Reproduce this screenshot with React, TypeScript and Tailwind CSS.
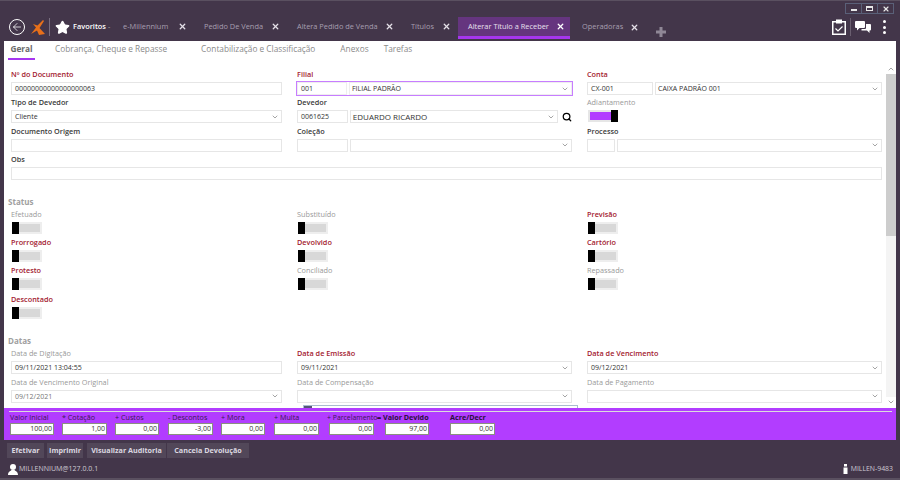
import React from "react";
import { ArrowLeft, ChevronDown, ChevronUp, Search, Star, X } from "lucide-react";

const tabs = [
  { name: "e-Millennium", w: "w-[64px]" },
  { name: "Pedido De Venda", w: "w-[76px]" },
  { name: "Altera Pedido de Venda", w: "w-[97px]" },
  { name: "Títulos", w: "w-[40px]" },
];

const totals = [
  { label: "Valor Inicial", value: "100,00", w: "w-[44px]", ml: "", lbl: "" },
  { label: "* Cotação", value: "1,00", w: "w-[45px]", ml: "ml-[8px]", lbl: "" },
  { label: "+ Custos", value: "0,00", w: "w-[44px]", ml: "ml-[8px]", lbl: "" },
  { label: "- Descontos", value: "-3,00", w: "w-[45px]", ml: "ml-[9px]", lbl: "" },
  { label: "+ Mora", value: "0,00", w: "w-[44px]", ml: "ml-[8px]", lbl: "" },
  { label: "+ Multa", value: "0,00", w: "w-[45px]", ml: "ml-[9px]", lbl: "" },
  { label: "+ Parcelamento", value: "0,00", w: "w-[45px]", ml: "ml-[10px]", lbl: "-ml-[2px] !text-[6.9px]" },
  { label: "= Valor Devido", value: "97,00", w: "w-[44px]", ml: "ml-[11px]", lbl: "-ml-[8px]", bold: true },
  { label: "Acre/Decr", value: "0,00", w: "w-[45px]", ml: "ml-[21px]", lbl: "", bold: true },
];

const buttons = [
  { label: "Efetivar", cls: "w-[37px]" },
  { label: "Imprimir", cls: "w-[36px] ml-[3px]" },
  { label: "Visualizar Auditoria", cls: "w-[79px] ml-[4px]" },
  { label: "Cancela Devolução", cls: "w-[82px] ml-[1px]" },
];

const Label = ({ children, color = "dark" }: { children: React.ReactNode; color?: string }) => (
  <div
    className={
      "h-[15px] leading-[15px] text-[7.3px] whitespace-nowrap " +
      (color === "red"
        ? "text-[#a3202f] font-semibold"
        : color === "gray"
          ? "text-[#999999] font-medium"
          : "text-[#3a3a3a] font-semibold")
    }
  >
    {children}
  </div>
);

const Box = ({ children, className = "", arrow = false, gray = false }: { children?: React.ReactNode; className?: string; arrow?: boolean; gray?: boolean }) => (
  <div
    className={
      "flex items-center justify-between h-[13px] border border-[#e6e6e6] bg-white pl-[3px] pr-[2px] leading-none whitespace-nowrap " +
      (gray ? "text-[#777777] " : "text-[#333333] ") +
      className
    }
  >
    <span>{children}</span>
    {arrow && <ChevronDown size={8} strokeWidth={2} className="text-[#777777] shrink-0" />}
  </div>
);

const Toggle = ({ on = false }: { on?: boolean }) => (
  <div className="h-[13px] flex items-start">
    {on ? (
      <div className="relative w-[30px] h-[12px] bg-[#e6e6e6] p-[2px] ml-[1px]">
        <div className="h-full w-[21px] bg-[#b23dff]" />
        <div className="absolute right-0 top-0 h-[12px] w-[7px] bg-black" />
      </div>
    ) : (
      <div className="relative w-[30px] h-[12px] bg-[#eeeeee] py-[2px] pl-[7px] pr-[2px] ml-[1px]">
        <div className="h-full bg-[#d8d8d8]" />
        <div className="absolute left-0 top-0 h-[12px] w-[7px] bg-black" />
      </div>
    )}
  </div>
);

const Field = ({ label, color, children }: { label: string; color?: string; children: React.ReactNode }) => (
  <div className="h-[28.4px]">
    <Label color={color}>{label}</Label>
    {children}
  </div>
);

const Switch = ({ label, color, on }: { label: string; color?: string; on?: boolean }) => (
  <Field label={label} color={color}>
    <Toggle on={on} />
  </Field>
);

const Heading = ({ children }: { children: React.ReactNode }) => (
  <div className="h-[13px] leading-[15px] -ml-[3px] text-[8px] font-bold text-[#a0a0a0]">{children}</div>
);

export default function App() {
  return (
    <div
      className="w-[900px] h-[480px] flex flex-col overflow-hidden bg-[#43364a] border-t border-[#5a5060]"
      style={{ fontFamily: '"Open Sans", "Noto Sans", sans-serif' }}
    >
      {/* topo */}
      <div className="h-[40px] flex shrink-0 relative">
        <div className="flex items-end h-full w-full pb-[1px]">
          <div className="flex items-center w-[115px] h-[22px] pl-[9px] mb-[2px]">
            <div className="w-[16px] h-[16px] rounded-full border border-white flex items-center justify-center shrink-0">
              <ArrowLeft size={12} className="text-white" strokeWidth={1.5} />
            </div>
            <svg width="14" height="15" viewBox="0 0 14 15" className="ml-[6px] shrink-0">
              <path d="M12 0 L13 1 L8.5 8 L14 14 L8 15 L6 10.5 L0 14 L5 7.5 L2 4 L6.5 5.5 Z" fill="#e8701a" />
            </svg>
            <div className="w-px h-[18px] bg-[#7a6f80] ml-[4px] shrink-0" />
            <Star size={15} fill="white" className="text-white ml-[5px] shrink-0" />
            <span className="ml-[3px] text-[7.4px] font-semibold text-white whitespace-nowrap">Favoritos</span>
            <span className="ml-[2px] text-[7px] text-[#aaaaaa]">-</span>
          </div>
          <div className="flex items-center h-[22px] ml-[8px] mb-[2px] mr-[7px] gap-[17px]">
            {tabs.map((t) => (
              <div key={t.name} className={"flex items-center " + t.w}>
                <span className="text-[7.4px] text-[#a79fb0] whitespace-nowrap">{t.name}</span>
                <X size={9} strokeWidth={3.5} className="text-[#e4e0e8] shrink-0 ml-auto" />
              </div>
            ))}
          </div>
          <div className="flex items-center h-[22px] w-[112px] mb-[1px] bg-[#65357f] border-b-[3px] border-[#a636f0] pl-[10px] pr-[5px]">
            <span className="text-[7.4px] text-[#e8e0ee] whitespace-nowrap">Alterar Título a Receber</span>
            <X size={9} strokeWidth={3.5} className="text-white ml-auto" />
          </div>
          <div className="flex items-center h-[22px] ml-[12px] mb-[2px] w-[57px]">
            <span className="text-[7.4px] text-[#a79fb0]">Operadoras</span>
            <X size={9} strokeWidth={3.5} className="text-[#e4e0e8] ml-auto" />
          </div>
          <svg width="10" height="10" viewBox="0 0 10 10" className="ml-[17px] mb-[3px]">
            <path d="M3.5 0h3v3.5H10v3H6.5V10h-3V6.5H0v-3h3.5z" fill="#8f8796" />
          </svg>
          <div className="ml-auto flex items-center h-[22px] pr-[14px] mb-[2px]">
            <svg width="14" height="16" viewBox="0 0 14 16">
              <rect x="0.75" y="2.75" width="12.5" height="12.5" fill="none" stroke="white" strokeWidth="1.5" />
              <rect x="4" y="0.5" width="6" height="4" fill="white" />
              <path d="M3.5 9.5 L6 12 L10.5 7.5" fill="none" stroke="white" strokeWidth="1.2" />
            </svg>
            <div className="w-px h-[18px] bg-[#6a5f70] ml-[4px]" />
            <svg width="16" height="13" viewBox="0 0 16 13" className="ml-[4px]">
              <path d="M1 0h8a1 1 0 0 1 1 1v5a1 1 0 0 1-1 1H4.5L2 9.5V7H1a1 1 0 0 1-1-1V1a1 1 0 0 1 1-1z" fill="white" />
              <path d="M11 3h4a1 1 0 0 1 1 1v4.5a1 1 0 0 1-1 1h-.5V12L12 9.5H6.5V8H10a1 1 0 0 0 1-1z" fill="white" />
            </svg>
            <div className="flex flex-col gap-[2.5px] ml-[12px]">
              <div className="w-[3px] h-[3px] bg-white rounded-full" />
              <div className="w-[3px] h-[3px] bg-white rounded-full" />
              <div className="w-[3px] h-[3px] bg-white rounded-full" />
            </div>
          </div>
        </div>
        <div className="absolute right-[6px] top-[2px] flex border border-[#5a6078] h-[11px] w-[49px]">
          <div className="flex-1 flex items-center justify-center border-r border-[#5a6078]">
            <div className="w-[6px] h-[2px] bg-[#e8e8e8] mt-[2px]" />
          </div>
          <div className="flex-1 flex items-center justify-center border-r border-[#5a6078]">
            <div className="w-[7px] h-[5px] border border-t-2 border-[#e8e8e8]" />
          </div>
          <div className="flex-1 flex items-center justify-center">
            <X size={8} strokeWidth={3.5} className="text-[#e8e8e8]" />
          </div>
        </div>
      </div>

      {/* corpo */}
      <div className="mx-[4px] h-[367px] shrink-0 bg-white flex flex-col relative">
        <div className="h-[19px] flex items-start pl-[4px] pt-[1px] text-[8.3px] text-[#8a8a8a] shrink-0">
          <div className="w-[27px] h-[18px] border-b-2 border-[#a636f0] text-center leading-[14px] font-bold text-[#6a6a6a]">Geral</div>
          <span className="ml-[20px] leading-[14px] whitespace-nowrap">Cobrança, Cheque e Repasse</span>
          <span className="ml-[34px] leading-[14px] whitespace-nowrap">Contabilização e Classificação</span>
          <span className="ml-[25px] leading-[14px]">Anexos</span>
          <span className="ml-[15px] leading-[14px]">Tarefas</span>
        </div>
        <div className="flex-1 min-h-0 flex overflow-hidden">
          <div className="w-[882px] pl-[7px] pt-[7px] overflow-hidden">
            <div className="grid grid-cols-[271px_275px_295px] gap-x-[15px] text-[7px]">
              <Field label="Nº do Documento" color="red">
                <Box>00000000000000000063</Box>
              </Field>
              <Field label="Filial" color="red">
                <div className="flex gap-[2px] -mx-[1px] -my-[1px] border border-[#c77dff]">
                  <Box className="w-[50px] !border-[#eeeeee]">001</Box>
                  <Box arrow className="flex-1 !border-[#eeeeee] font-medium !pl-[2px]">FILIAL PADRÃO</Box>
                </div>
              </Field>
              <Field label="Conta" color="red">
                <div className="flex gap-[2px]">
                  <Box className="w-[66px]">CX-001</Box>
                  <Box arrow className="flex-1 font-medium !pl-[2px]">CAIXA PADRÃO 001</Box>
                </div>
              </Field>

              <Field label="Tipo de Devedor">
                <Box arrow>Cliente</Box>
              </Field>
              <Field label="Devedor">
                <div className="flex items-center gap-[2px]">
                  <Box className="w-[51px]">0061625</Box>
                  <Box arrow className="w-[209px] font-medium text-[8px] !pl-[2px]">EDUARDO RICARDO</Box>
                  <Search size={10} strokeWidth={3} className="text-black ml-[2px]" />
                </div>
              </Field>
              <Switch label="Adiantamento" color="gray" on />

              <Field label="Documento Origem">
                <Box />
              </Field>
              <Field label="Coleção">
                <div className="flex gap-[2px]">
                  <Box className="w-[51px]" />
                  <Box arrow className="flex-1" />
                </div>
              </Field>
              <Field label="Processo">
                <div className="flex gap-[2px]">
                  <Box className="w-[28px]" />
                  <Box arrow className="flex-1" />
                </div>
              </Field>

              <div className="col-span-3">
                <Field label="Obs">
                  <Box />
                </Field>
              </div>
            </div>

            <div className="mt-[13px]">
              <Heading>Status</Heading>
            </div>
            <div className="grid grid-cols-[271px_275px_295px] gap-x-[15px]">
              <Switch label="Efetuado" color="gray" />
              <Switch label="Substituído" color="gray" />
              <Switch label="Previsão" color="red" />
              <Switch label="Prorrogado" color="red" />
              <Switch label="Devolvido" color="red" />
              <Switch label="Cartório" color="red" />
              <Switch label="Protesto" color="red" />
              <Switch label="Conciliado" color="gray" />
              <Switch label="Repassado" color="gray" />
              <Switch label="Descontado" color="red" />
            </div>

            <div className="mt-[13px]">
              <Heading>Datas</Heading>
            </div>
            <div className="grid grid-cols-[271px_275px_295px] gap-x-[15px] text-[7px]">
              <Field label="Data de Digitação" color="gray">
                <Box>09/11/2021 13:04:55</Box>
              </Field>
              <Field label="Data de Emissão" color="red">
                <Box arrow>09/11/2021</Box>
              </Field>
              <Field label="Data de Vencimento" color="red">
                <Box arrow>09/12/2021</Box>
              </Field>
              <Field label="Data de Vencimento Original" color="gray">
                <Box arrow gray>09/12/2021</Box>
              </Field>
              <Field label="Data de Compensação" color="gray">
                <Box arrow />
              </Field>
              <Field label="Data de Pagamento" color="gray">
                <Box arrow />
              </Field>
            </div>
          </div>
          <div className="w-[10px] ml-[1px] flex flex-col items-center pt-[5px] pb-[2px]">
            <ChevronUp size={8} className="text-[#777777] shrink-0" />
            <div className="w-full flex-1 bg-[#f4f4f4] mt-[1px]">
              <div className="h-[162px] bg-[#cdcdcd]" />
            </div>
            <ChevronDown size={8} className="text-[#777777] shrink-0 mt-[1px]" />
          </div>
        </div>
        {/* popup do calendario, so a borda aparece */}
        <div className="absolute left-[299px] bottom-0 w-[275px] h-[3px] border border-b-0 border-[#a9bcd0] bg-white">
          <div className="w-[8px] h-[2px] bg-[#555577]" />
        </div>
      </div>

      {/* totais */}
      <div className="mx-[4px] h-[32px] shrink-0 bg-[#b23dff] pl-[6px] pt-[3px]">
        <div className="h-px bg-[#dcdcdc] -ml-[1px] mr-[4px]" />
        <div className="flex">
          {totals.map((t) => (
            <div key={t.label} className={t.w + " " + t.ml}>
              <div className={"h-[11px] leading-[11px] text-[7.2px] whitespace-nowrap " + t.lbl + " " + (t.bold ? "font-bold text-[#2a1040]" : "text-[#3a1a55] font-medium")}>{t.label}</div>
              <div className="h-[12px] bg-white border border-[#8a8f80] text-right pr-[1px] text-[7px] leading-[10px] text-[#333333]">{t.value}</div>
            </div>
          ))}
        </div>
      </div>

      {/* botoes */}
      <div className="flex shrink-0 pl-[7px] pt-[3px] h-[21px]">
        {buttons.map((b) => (
          <button
            key={b.label}
            className={"h-[15px] bg-[#524759] text-[7.2px] font-bold text-[#dcd8e0] whitespace-nowrap " + b.cls}
          >
            {b.label}
          </button>
        ))}
      </div>

      {/* rodape */}
      <div className="flex-1 flex items-center justify-between pl-[8px] pr-[7px] pb-[1px] border-b-2 border-[#5a5060]">
        <div className="flex items-center gap-[1px]">
          <svg width="10" height="11" viewBox="0 0 10 11">
            <circle cx="5" cy="3" r="3" fill="white" />
            <path d="M0 11 C0 7 3 7 3.5 6 H6.5 C7 7 10 7 10 11 Z" fill="white" />
          </svg>
          <span className="text-[7px] text-[#cfcbd4]">MILLENNIUM@127.0.0.1</span>
        </div>
        <div className="flex items-center gap-[3px]">
          <svg width="5" height="10" viewBox="0 0 5 10">
            <rect x="1" y="0" width="3" height="2.5" fill="white" />
            <rect x="0.5" y="3.5" width="4" height="6.5" fill="white" />
          </svg>
          <span className="text-[6.9px] text-[#cfcbd4]">MILLEN-9483</span>
        </div>
      </div>
    </div>
  );
}
